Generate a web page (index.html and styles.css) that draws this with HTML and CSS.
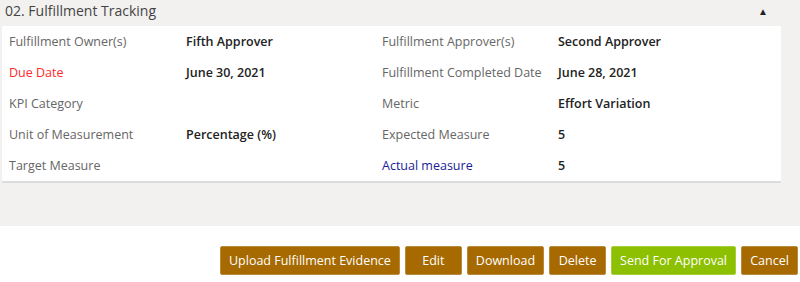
FILE: index.html
```html
<!DOCTYPE html>
<html lang="en">
<head>
    <meta charset="UTF-8">
    <title>Fulfillment Tracking</title>
    <link rel="stylesheet" href="styles.css">
</head>
<body>
    <div class="section">
        <div class="section-head">
            <span class="section-title">02. Fulfillment Tracking</span>
            <span class="toggle">&#9650;</span>
        </div>
        <div class="card">
            <div class="row">
                <div class="label">Fulfillment Owner(s)</div>
                <div class="value">Fifth Approver</div>
                <div class="label">Fulfillment Approver(s)</div>
                <div class="value">Second Approver</div>
            </div>
            <div class="row">
                <div class="label due">Due Date</div>
                <div class="value">June 30, 2021</div>
                <div class="label">Fulfillment Completed Date</div>
                <div class="value">June 28, 2021</div>
            </div>
            <div class="row">
                <div class="label">KPI Category</div>
                <div class="value"></div>
                <div class="label">Metric</div>
                <div class="value">Effort Variation</div>
            </div>
            <div class="row">
                <div class="label">Unit of Measurement</div>
                <div class="value">Percentage (%)</div>
                <div class="label">Expected Measure</div>
                <div class="value">5</div>
            </div>
            <div class="row">
                <div class="label">Target Measure</div>
                <div class="value"></div>
                <div class="label actual">Actual measure</div>
                <div class="value">5</div>
            </div>
        </div>
    </div>
    <div class="actions">
        <button class="btn">Upload Fulfillment Evidence</button>
        <button class="btn">Edit</button>
        <button class="btn">Download</button>
        <button class="btn">Delete</button>
        <button class="btn btn-green">Send For Approval</button>
        <button class="btn">Cancel</button>
    </div>
</body>
</html>
```

FILE: styles.css
```css
body {
    margin: 0;
    font-family: 'Open Sans', sans-serif;
    font-size: 12.5px;
    color: #222;
    background-color: white;
}

.section {
    background-color: #f2f1f0;
    height: 226px;
    padding: 0 19px 0 2px;
}

.section-head {
    display: flex;
    justify-content: space-between;
    align-items: center;
    height: 27px;
    padding: 0 13px 0 3px;
}

.section-title {
    font-size: 14px;
    color: #444;
    margin-top: -6px;
}

.toggle {
    font-size: 10px;
    color: #222;
    margin-top: -6px;
}

.card {
    background-color: white;
    border-bottom: 2px solid #dcdcdc;
    padding: 0 7px;
    height: 155px;
}

.row {
    display: grid;
    grid-template-columns: 177px 196px 176px 1fr;
    height: 31px;
    align-items: center;
    margin-top: -1px;
    margin-bottom: 1px;
}

.label {
    color: #666;
}

.value {
    font-weight: 600;
    color: #222;
}

.due {
    color: #ff2a2a;
}

.actual {
    color: #1a1a9a;
}

.actions {
    display: flex;
    justify-content: flex-end;
    gap: 5px;
    padding: 20px 2px 0 0;
}

.btn {
    background-color: #a66a00;
    border: 1px solid #b98a3a;
    border-radius: 2px;
    color: white;
    font-family: 'Open Sans', sans-serif;
    font-size: 12.5px;
    height: 29px;
    min-width: 57px;
    padding: 0 8px;
    cursor: pointer;
}

.btn-green {
    background-color: #8cc000;
    border-color: #a5cf3a;
}
```
